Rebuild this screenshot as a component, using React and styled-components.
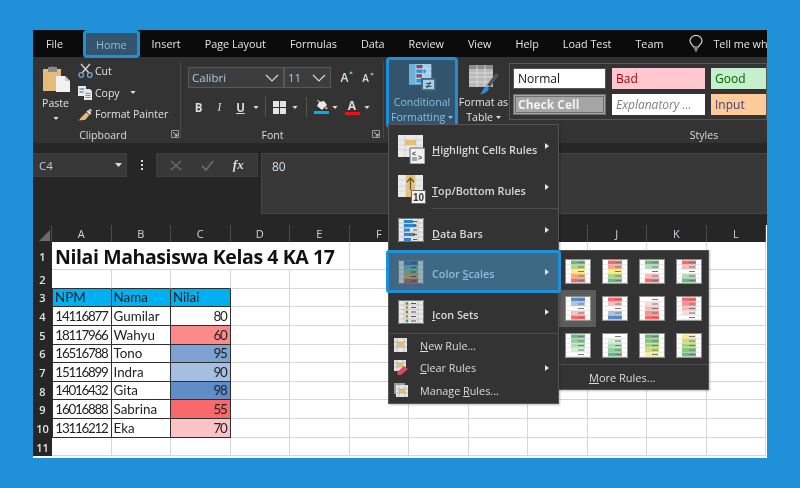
import React from "react";
import styled, { createGlobalStyle } from "styled-components";

const Global = createGlobalStyle`
  html, body { margin: 0; padding: 0; background: #1f8fd8; }
  body { width: 800px; height: 488px; overflow: hidden; font-family: "Open Sans", "Liberation Sans", sans-serif; }
`;

const Page = styled.div`
  width: 800px; height: 488px; padding: 30px 33px; box-sizing: border-box;
  background: #2090d9;
  filter: blur(0.35px);
`;
const Win = styled.div`
  position: relative; width: 734px; height: 428px; overflow: hidden;
  display: flex; flex-direction: column; background: #262626;
`;

/* Tabs */
const TabBar = styled.div`
  height: 27px; flex: none; display: flex; align-items: stretch; background: #0b0b0b; padding-left: 1px; position: relative; z-index: 2;
`;
const Tab = styled.div`
  display: flex; align-items: center; padding: 0 12px; font-size: 10.8px; color: #e4e4e4; white-space: nowrap; box-sizing: border-box;
  margin-right: ${p => p.$mr || 0}px;
  ${p => p.$active && `
    background: #32546c; color: #8fbcdc; border: 3px solid #1f8fd8; border-radius: 4px; padding: 0 10px; height: 28px;
  `}
`;
const TellMe = styled(Tab)`padding: 0;`;
const Bulb = styled.div`display: flex; align-items: center; margin: 0 10px 0 14px;`;

/* Ribbon */
const Ribbon = styled.div`
  height: 86px; flex: none; background: #333333; display: flex; color: #e2e2e2; font-size: 10.5px;
`;
const Group = styled.div`
  position: relative; width: ${p => p.$w}px; flex: none; display: flex; flex-direction: column; box-sizing: border-box;
  ${p => p.$sep && `&::after { content: ""; position: absolute; right: 0; top: 5px; bottom: 5px; width: 1px; background: #4a4a4a; }`}
`;
const GroupBody = styled.div`flex: 1; min-height: 0; display: flex;`;
const GroupLabel = styled.div`
  height: 16px; flex: none; display: flex; align-items: center; justify-content: center; font-size: 10.5px; color: #dcdcdc; position: relative;
  padding-right: ${p => p.$pr || 0}px; padding-left: ${p => p.$pl || 0}px;
`;
const Launcher = styled.svg`position: absolute; right: ${p => p.$r || 6}px; top: 3px;`;
const PasteCol = styled.div`
  width: 45px; flex: none; display: flex; flex-direction: column; align-items: center; padding: 8px 0 0 0; box-sizing: border-box;
`;
const PasteText = styled.div`margin-top: 3px; line-height: 14px;`;
const Caret = styled.svg`
  display: ${p => p.$inline ? "inline-block" : "block"}; flex: none;
  vertical-align: ${p => p.$inline ? "2px" : "baseline"};
  margin-left: ${p => p.$ml || 0}px; margin-right: ${p => p.$mr || 0}px; margin-top: ${p => p.$mt || 0}px;
`;
const ClipList = styled.div`display: flex; flex-direction: column; padding-top: 3px;`;
const ClipRow = styled.div`
  display: flex; align-items: center; height: 21.7px; gap: 2px; white-space: nowrap;
`;
const ClipText = styled.span`margin-left: ${p => p.$ml || 0}px;`;
const FontArea = styled.div`display: flex; flex-direction: column; padding: 10px 0 0 7px;`;
const ComboRow = styled.div`display: flex; align-items: center;`;
const Combo = styled.div`
  display: flex; align-items: center; justify-content: space-between; box-sizing: border-box;
  width: ${p => p.$w}px; height: 21px; border: 1px solid #585858; background: #3d3d3d; color: #a8cce8; padding: 0 4px 0 3px;
  font-size: 11.5px; margin-right: ${p => p.$mr || 0}px;
`;
const GrowA = styled.div`
  position: relative; font-size: ${p => p.$s}px; color: #ddd; width: 21px; text-align: center; font-weight: 600;
`;
const GrowMark = styled.svg`position: absolute; right: 2px; top: 2px; transform: ${p => p.$up ? "rotate(180deg)" : "none"};`;
const ToolRow = styled.div`display: flex; align-items: center; margin-top: 7px; height: 24px;`;
const FmtBtn = styled.span`
  width: 21px; text-align: center; font-size: 11.5px; color: #ddd;
  font-weight: ${p => p.$i ? 400 : 700}; font-style: ${p => p.$i ? "italic" : "normal"};
  text-decoration: ${p => p.$u ? "underline" : "none"}; font-family: ${p => p.$i ? '"Liberation Serif", serif' : '"Open Sans", sans-serif'};
`;
const Vsep = styled.span`width: 1px; height: 20px; background: #555; margin-left: ${p => p.$l}px; margin-right: ${p => p.$r}px;`;
const IconBtn = styled.div`width: ${p => p.$w}px; display: flex; flex-direction: column; align-items: center;`;
const ColorBar = styled.span`display: block; width: 15px; height: 3px; background: ${p => p.$c};`;
const AText = styled.span`font-size: 12px; line-height: 12px; font-weight: 700; color: #ddd;`;
const BigBtn = styled.div`
  box-sizing: border-box; width: ${p => p.$w}px; height: 71px; flex: none; display: flex; flex-direction: column; align-items: center;
  padding-top: ${p => p.$pt}px; line-height: 15px; font-size: 10.6px; white-space: nowrap; text-align: center;
  ${p => p.$active && `background: #32546c; color: #8fbcdc; border: 3px solid #1f8fd8; border-radius: 4px;`}
`;
const BigLabel = styled.div`margin-top: ${p => p.$mt}px;`;
const Gallery = styled.div`
  display: grid; grid-template-columns: 93px 93px 60px; grid-template-rows: 21px 21px; column-gap: 6px; row-gap: 5px;
  width: 258px; height: 57px; box-sizing: border-box; margin-top: 6px; border: 1px solid #565656; padding: 4px 0 0 3px; flex: none; overflow: hidden;
`;
const StyleCell = styled.div`
  display: flex; align-items: center; padding-left: 4px; font-size: 12px; box-sizing: border-box;
  background: ${p => p.$bg}; color: ${p => p.$fg}; white-space: nowrap;
  font-style: ${p => p.$i ? "italic" : "normal"}; font-weight: ${p => p.$b ? 700 : 400};
  ${p => p.$bd && `border: 1px solid ${p.$bd};`}
  ${p => p.$dbl && `outline: 1px solid #6e6e6e; outline-offset: -3px; border: 1px solid #6e6e6e;`}
`;

/* Formula bar */
const FormulaArea = styled.div`
  height: 82px; flex: none; background: #262626; display: flex; padding-top: 10px; box-sizing: border-box; align-items: flex-start;
`;
const NameBox = styled.div`
  width: 94px; height: 24px; box-sizing: border-box; background: #383838; border: 1px solid #3f3f3f; border-left: 0; display: flex; align-items: center; justify-content: space-between;
  padding: 0 4px 0 6px; color: #a8cce8; font-size: 11.5px; flex: none;
`;
const Dots = styled.div`width: 29px; flex: none; height: 24px; display: flex; flex-direction: column; align-items: center; justify-content: center; gap: 2px;`;
const Dot = styled.span`width: 2px; height: 2px; background: #ddd;`;
const FnBox = styled.div`
  width: 102px; height: 24px; background: #383838; border: 1px solid #3f3f3f; box-sizing: border-box; display: flex; align-items: center; justify-content: space-around; padding: 0 4px; flex: none; margin-right: 3px;
`;
const Fx = styled.span`font-family: "Liberation Serif", serif; font-style: italic; font-weight: 700; font-size: 13px; color: #ddd;`;
const FormulaInput = styled.div`
  flex: 1; height: 61px; box-sizing: border-box; background: #383838; border: 1px solid #454545; border-right: 0; color: #d4dfe8; font-size: 12px; padding: 4px 10px;
`;

/* Sheet */
const Sheet = styled.div`
  flex: 1; min-height: 0; display: grid; background: #fff;
  grid-template-columns: 19px repeat(12, 59.5px);
  grid-template-rows: 17px 28px repeat(10, 18.65px);
  font-family: Lato, "Open Sans", sans-serif; font-size: 13.4px; color: #222;
`;
const Corner = styled.div`background: #262626; display: flex; align-items: flex-end; justify-content: flex-end; border-right: 1px solid #4b4b4b; box-sizing: border-box; padding: 0 1px 1px 0;`;
const ColHead = styled.div`
  background: #262626; color: #cfd6dc; display: flex; align-items: center; justify-content: center; font-family: "Open Sans", sans-serif; font-size: 11px;
  border-right: 1px solid #4b4b4b; box-sizing: border-box;
`;
const RowHead = styled.div`
  background: #262626; color: #e4e4e4; display: flex; align-items: center; justify-content: center; font-family: "Open Sans", sans-serif; font-size: 11px; font-weight: 600; box-sizing: border-box;
`;
const Cell = styled.div`
  box-sizing: border-box; display: flex; align-items: center; overflow: visible; white-space: nowrap;
  padding: 1px ${p => p.$right ? 3 : 2}px 0 2px; line-height: 1;
  letter-spacing: ${p => p.$right ? "-1.25px" : "0"};
  justify-content: ${p => p.$right ? "flex-end" : "flex-start"};
  background: ${p => p.$bg || "#fff"};
  border-right: 1px solid ${p => p.$tbl ? "#2f2f2f" : "#d6d6d6"};
  border-bottom: 1px solid ${p => p.$tbl || p.$above ? "#2f2f2f" : "#d6d6d6"};
  ${p => p.$tbl && p.$first && `border-left: 1px solid #2f2f2f;`}
`;
const Title = styled(Cell)`
  grid-column: span 5; font-size: 19.5px; font-weight: 700; color: #111; font-family: "Open Sans", sans-serif; padding: 3px 0 0 3px; letter-spacing: -0.4px;
`;

/* Menus */
const Menu = styled.div`
  position: absolute; left: ${p => p.$l}px; top: ${p => p.$t}px; width: ${p => p.$w}px; height: ${p => p.$hh}px; z-index: 3;
  background: #333333; border: 1px solid #555; box-sizing: border-box; color: #dcdcdc; font-size: 11px;
  padding-top: ${p => p.$pt || 0}px; box-shadow: 1px 1px 2px rgba(0,0,0,.25);
`;
const BigRow = styled.div`
  position: relative; box-sizing: border-box; height: ${p => p.$h}px; padding-left: 9px; display: flex; align-items: center; font-weight: 600; color: #d8d8d8; font-size: 10.8px;
  ${p => p.$active && `
    margin: 0 -3px; background: #3d6985; border: 3px solid #1f8fd8; border-radius: 3px; color: #8fbcdc;
  `}
`;
const BigIcon = styled.div`width: 34px; flex: none; display: flex; margin-top: ${p => p.$mt || 0}px; margin-bottom: ${p => p.$mb || 0}px;`;
const RowLabel = styled.span`margin-top: ${p => p.$mt || 0}px;`;
const ArrowRight = styled.span`
  position: absolute; right: 9px; top: 50%; margin-top: ${p => p.$mt || 0}px; transform: translateY(-50%);
  width: 0; height: 0; border-left: 4px solid #e4e4e4; border-top: 3.5px solid transparent; border-bottom: 3.5px solid transparent;
`;
const Rule = styled.div`height: 1px; background: #4d4d4d; margin-left: ${p => p.$ml || 0}px;`;
const SmallRow = styled.div`
  position: relative; height: 22.5px; display: flex; align-items: center; padding-left: 5px; font-size: 10.8px;
`;
const SmallIcon = styled.div`width: 26px; flex: none; display: flex;`;
const SwatchGrid = styled.div`
  display: grid; grid-template-columns: repeat(4, 37px); grid-template-rows: repeat(3, 37px); padding: 2px 0 0 1px; height: 113px; box-sizing: border-box;
`;
const SwatchCell = styled.div`
  display: flex; align-items: center; justify-content: center; ${p => p.$hot && `background: #5c5c5c;`}
`;
const MoreRow = styled.div`
  border-top: 1px solid #4d4d4d; padding-left: 31px; height: 25px; display: flex; align-items: center;
`;

const CaretDown = ({ c = "#ddd", w = 7, h = 4, inline, ml, mr, mt }) => (
  <Caret width={w} height={h} viewBox="0 0 7 4" $inline={inline} $ml={ml} $mr={mr} $mt={mt}><path d="M0 0h7L3.5 4z" fill={c} /></Caret>
);
const Chevron = () => (
  <svg width="14" height="8" viewBox="0 0 14 8"><path d="M1 1l6 6 6-6" fill="none" stroke="#d8d8d8" strokeWidth="1.2" /></svg>
);
const Launch = ({ r }) => (
  <Launcher $r={r} width="8" height="8" viewBox="0 0 8 8"><path d="M.5 7.5v-7h7v7z" fill="none" stroke="#999" /><path d="M2 2l4 4M6 3.5V6H3.5" fill="none" stroke="#ccc" /></Launcher>
);

const PasteIcon = () => (
  <svg width="28" height="28" viewBox="0 0 28 28">
    <path d="M1 4h18v22H1z" fill="#e3bb7a" />
    <path d="M6 2h3a2 2 0 0 1 3 0h3v5H6z" fill="#8a8a8a" />
    <path d="M14 11h9l5 5v11H14z" fill="#f2f2f2" />
    <path d="M23 11v5h5" fill="#c8c8c8" />
  </svg>
);
const Scissors = () => (
  <svg width="15" height="15" viewBox="0 0 15 15" fill="none">
    <path d="M3 1l8 9M12 1l-8 9" stroke="#d8d8d8" strokeWidth="1.3" />
    <circle cx="3.2" cy="12" r="2.3" stroke="#6fa8d8" strokeWidth="1.3" />
    <circle cx="11.8" cy="12" r="2.3" stroke="#6fa8d8" strokeWidth="1.3" />
  </svg>
);
const CopyIcon = () => (
  <svg width="15" height="15" viewBox="0 0 15 15">
    <path d="M0 1h8v10H0z" fill="#eee" /><path d="M1.5 3h5v2h-5zM1.5 6h4v2h-4z" fill="#7aa7cf" />
    <path d="M6 4h6l2 2v9H6z" fill="#e8e8e8" /><path d="M7.5 8h5v1h-5zM7.5 10h5v1h-5zM7.5 12h5v1h-5z" fill="#5b95c9" />
  </svg>
);
const Painter = () => (
  <svg width="15" height="15" viewBox="0 0 16 15">
    <path d="M9 5l3 3-4 5-7 1 2-3z" fill="#e3bb7a" />
    <path d="M9 4l2-1 3 3-1 2z" fill="#eee" />
    <path d="M11 3l2-2 2 2-2 2z" fill="#bbb" />
  </svg>
);
const BordersIcon = () => (
  <svg width="13" height="13" viewBox="0 0 13 13"><path d="M0 0h6v6H0zM7 0h6v6H7zM0 7h6v6H0zM7 7h6v6H7z" fill="#e4e4e4" /></svg>
);
const FillIcon = () => (
  <svg width="15" height="11" viewBox="0 0 15 11"><path d="M5 2l5-1 3 4-5 5-5-4z" fill="#e8e8e8" /><path d="M3 1c2-1 3 0 3 3" fill="none" stroke="#e8e8e8" /><path d="M12 6l2 3h-3z" fill="#e3bb7a" /></svg>
);
const CFIcon = () => (
  <svg width="29" height="29" viewBox="0 0 29 29">
    <path d="M0 0h24v22H0z" fill="#a5cfe8" />
    <path d="M0 0h7v22H0z" fill="#6eb0dc" />
    <path d="M8 1h7v4H8z" fill="#8a4a55" /><path d="M8 6h10v4H8z" fill="#2f8fdc" /><path d="M8 11h6v4H8z" fill="#8a4a55" /><path d="M8 16h9v4H8z" fill="#2f8fdc" />
    <path d="M7 5h17M7 10h17M7 15h17M15 0v22" stroke="#c9e2f2" strokeWidth=".7" />
    <path d="M13 15h16v14H13z" fill="#43657c" /><path d="M15 17h12v10H15z" fill="#a8cfe6" />
    <path d="M18 21h6M18 24h6M23 19l-4 7" stroke="#32546c" strokeWidth="1.2" />
  </svg>
);
const TableIcon = () => (
  <svg width="31" height="31" viewBox="0 0 31 31">
    <path d="M1 1h24v22H1z" fill="#b9b9b9" />
    <path d="M1 1h24v4H1z" fill="#8e8e8e" />
    <path d="M1 9h24M1 13h24M1 18h24M9 1v22M17 1v22" stroke="#e2e2e2" strokeWidth=".8" />
    <path d="M28 9l3 2-9 12-3-2z" fill="#555" />
    <path d="M18 22l3 2c-1 4-5 6-9 6 3-2 3-6 6-8z" fill="#2f8fdc" />
  </svg>
);

const MiniSvg = styled.svg`opacity: ${p => p.$dim ? 0.55 : 1};`;
const MiniGrid = ({ children, dim }) => (
  <MiniSvg width="26" height="24" viewBox="0 0 26 24" $dim={dim}>
    <path d="M0 0h26v24H0z" fill="#e9e9e9" />
    <path d="M.5.5h25v23H.5z" fill="none" stroke="#777" />
    <path d="M1 5h24M1 9.5h24M1 14h24M1 19h24M6 1v22M20 1v22" stroke="#bdbdbd" strokeWidth=".7" />
    {children}
  </MiniSvg>
);
const HighlightIcon = () => (
  <svg width="27" height="30" viewBox="0 0 27 30">
    <path d="M0 1h25v22H0z" fill="#eaeaea" />
    <path d="M1 6h23M1 11h23M1 16h23M7 1v22M18 1v22" stroke="#c8c8c8" strokeWidth=".7" />
    <path d="M7 6h11v5H7z" fill="#e8bf6f" />
    <path d="M12 14h15v16H12z" fill="#f0f0f0" stroke="#666" />
    <text x="14" y="22" fontSize="7" fontFamily="Liberation Sans" fill="#333">&lt;</text>
    <text x="20" y="26" fontSize="7" fontFamily="Liberation Sans" fill="#333">&gt;</text>
    <path d="M14 24h5M14 26h5" stroke="#333" strokeWidth=".8" />
  </svg>
);
const TopIcon = () => (
  <svg width="28" height="29" viewBox="0 0 28 29">
    <path d="M0 0h25v22H0z" fill="#eaeaea" />
    <path d="M8 0h9v22H8z" fill="#e8bf6f" />
    <path d="M1 5h23M1 11h23M1 16h23M8 1v21M17 1v21" stroke="#c8c8c8" strokeWidth=".7" />
    <path d="M12.5 15V3M9 7l3.5-4L16 7" fill="none" stroke="#6a4f25" strokeWidth="1.2" />
    <path d="M13.5 15.5h14v13h-14z" fill="#f2f2f2" stroke="#666" />
    <text x="15" y="26" fontSize="10" fontWeight="700" fontFamily="Liberation Sans" fill="#333">10</text>
  </svg>
);
const DataBarsIcon = () => (
  <MiniGrid>
    <path d="M6 2h9v3H6zM6 10.5h6v3H6zM6 6h12v3H6zM6 15h11v3H6zM6 20h7v3H6z" fill="#2f83d0" />
    <path d="M15 3.5h4M15 7.5h4M15 12h4M15 16.5h4M15 21.5h4" stroke="#555" />
  </MiniGrid>
);
const ScaleIcon = () => (
  <MiniGrid dim>
    <path d="M6 1h14v4H6z" fill="#2f6fb5" /><path d="M6 5h14v4.5H6z" fill="#5cb0a8" /><path d="M6 9.5h14V14H6z" fill="#74c08a" /><path d="M6 14h14v5H6z" fill="#d4a14f" /><path d="M6 19h14v4H6z" fill="#c24a4a" />
    <path d="M13 3h5M13 7.5h5M13 12h5M13 16.5h5M13 21h5" stroke="#333" />
  </MiniGrid>
);
const IconSetsIcon = () => (
  <MiniGrid>
    <circle cx="9" cy="3.5" r="1.4" fill="#2ea36b" /><circle cx="9" cy="7.5" r="1.4" fill="#e07b2e" /><circle cx="9" cy="12" r="1.4" fill="#2ea36b" /><circle cx="9" cy="16.5" r="1.4" fill="#e07b2e" /><circle cx="9" cy="21" r="1.4" fill="#2ea36b" />
    <path d="M13 3.5h5M13 7.5h5M13 12h5M13 16.5h5M13 21h5" stroke="#555" />
  </MiniGrid>
);
const NewIcon = () => (
  <svg width="13" height="14" viewBox="0 0 13 14"><path d="M0 0h13v14H0z" fill="#e6e6e6" /><path d="M3 4h7v5H3z" fill="#e8bf6f" /><path d="M0 4h13M0 9h13M3 0v14M10 0v14" stroke="#aaa" strokeWidth=".6" /></svg>
);
const ClearIcon = () => (
  <svg width="15" height="15" viewBox="0 0 15 15"><path d="M0 0h12v11H0z" fill="#e6e6e6" /><path d="M3 3h6v4H3z" fill="#e8bf6f" /><path d="M0 3h12M0 7h12M3 0v11M9 0v11" stroke="#aaa" strokeWidth=".6" /><path d="M3 12l7-6 4 3-7 6H4z" fill="#d84a5c" /></svg>
);
const ManageIcon = () => (
  <svg width="14" height="14" viewBox="0 0 14 14"><path d="M0 0h11v2H2v9H0z" fill="#999" /><path d="M2 2h12v12H2z" fill="#e6e6e6" /><path d="M5 6h6v4H5z" fill="#e8bf6f" /><path d="M2 6h12M2 10h12M5 2v12M11 2v12" stroke="#aaa" strokeWidth=".6" /></svg>
);

const Swatch = ({ colors }) => (
  <svg width="26" height="25" viewBox="0 0 26 25">
    <path d="M0 0h26v25H0z" fill="#8f8f8f" />
    <path d="M1 1h24v23H1z" fill="#fff" />
    {colors.map((c, i) => (
      <g key={i}>
        <path d={`M6 ${1.5 + i * 4.5}h14v4H6z`} fill={c} />
        <path d={`M13 ${3.5 + i * 4.5}h6`} stroke="#777" strokeWidth="1" />
        <path d={`M1 ${5.7 + i * 4.5}h24`} stroke="#c9c9c9" strokeWidth=".5" />
      </g>
    ))}
  </svg>
);

const G = "#63be7b", Y = "#ffeb84", R = "#f8696b", W = "#ffffff", B = "#5a8ac6";
const scales = [
  [G, "#b1d580", Y, "#fbaa77", R], [R, "#fbaa77", Y, "#b1d580", G], [G, "#b1ddb1", W, "#fcb9ba", R], [R, "#fcb9ba", W, "#b1ddb1", G],
  [B, "#acc4e2", W, "#fcbfc0", R], [R, "#fcbfc0", W, "#acc4e2", B], [W, "#fddada", "#fcb4b5", "#fa8f90", R], [R, "#fa8f90", "#fcb4b5", "#fddada", W],
  [G, "#8fd0a0", "#b1ddb1", "#d8eedd", W], [W, "#d8eedd", "#b1ddb1", "#8fd0a0", G], [G, "#85c77c", "#a9d27f", "#cfdd82", Y], [Y, "#cfdd82", "#a9d27f", "#85c77c", G],
];

const cols = ["A", "B", "C", "D", "E", "F", "G", "H", "I", "J", "K", "L"];
const data = [
  ["14116877", "Gumilar", "80", "#ffffff"],
  ["18117966", "Wahyu", "60", "#fb8a8b"],
  ["16516788", "Tono", "95", "#7ea3d3"],
  ["15116899", "Indra", "90", "#a6bfe1"],
  ["14016432", "Gita", "98", "#5f8dc8"],
  ["16016888", "Sabrina", "55", "#f8696b"],
  ["13116212", "Eka", "70", "#fbc3c5"],
];

const renderRow = (r) => {
  const out = [<RowHead key={`h${r}`}>{r}</RowHead>];
  if (r === 1) {
    out.push(<Title key="t">Nilai Mahasiswa Kelas 4 KA 17</Title>);
    cols.slice(5).forEach(c => out.push(<Cell key={c + r} />));
    return out;
  }
  cols.forEach((c, i) => {
    const key = c + r;
    if (r === 3 && i < 3) {
      out.push(<Cell key={key} $tbl $first={i === 0} $bg="#00b0f0">{["NPM", "Nama", "Nilai"][i]}</Cell>);
    } else if (r >= 4 && r <= 10 && i < 3) {
      const d = data[r - 4];
      out.push(
        <Cell key={key} $tbl $first={i === 0} $right={i !== 1} $bg={i === 2 ? d[3] : "#fff"}>{d[i]}</Cell>
      );
    } else {
      out.push(<Cell key={key} $above={r === 2 && i < 3} />);
    }
  });
  return out;
};

export default function App() {
  return (
    <>
      <Global />
      <Page>
        <Win>
          <TabBar>
            <Tab $mr={8}>File</Tab>
            <Tab $active>Home</Tab>
            <Tab>Insert</Tab>
            <Tab>Page Layout</Tab>
            <Tab>Formulas</Tab>
            <Tab>Data</Tab>
            <Tab>Review</Tab>
            <Tab>View</Tab>
            <Tab>Help</Tab>
            <Tab>Load Test</Tab>
            <Tab>Team</Tab>
            <Bulb>
              <svg width="14" height="17" viewBox="0 0 14 17" fill="none" stroke="#e4e4e4" strokeWidth="1.1">
                <path d="M4.5 12C3.5 9.5 1 8.5 1 5.8a6 5.3 0 0 1 12 0c0 2.7-2.5 3.7-3.5 6.2z" /><path d="M5 14h4M6 16h2" />
              </svg>
            </Bulb>
            <TellMe>Tell me what</TellMe>
          </TabBar>
          <Ribbon>
            <Group $w={148} $sep>
              <GroupBody>
                <PasteCol>
                  <PasteIcon />
                  <PasteText>Paste</PasteText>
                  <CaretDown mt={7} w={6} h={3} />
                </PasteCol>
                <ClipList>
                  <ClipRow><Scissors /><ClipText>Cut</ClipText></ClipRow>
                  <ClipRow><CopyIcon /><ClipText>Copy</ClipText><CaretDown w={6} h={3} ml={8} /></ClipRow>
                  <ClipRow><Painter /><ClipText>Format Painter</ClipText></ClipRow>
                </ClipList>
              </GroupBody>
              <GroupLabel $pr={8}>Clipboard<Launch r={2} /></GroupLabel>
            </Group>
            <Group $w={203} $sep>
              <GroupBody>
                <FontArea>
                  <ComboRow>
                    <Combo $w={96}>Calibri<Chevron /></Combo>
                    <Combo $w={47} $mr={3}>11<Chevron /></Combo>
                    <GrowA $s={12}>A<GrowMark $up width="4" height="3" viewBox="0 0 7 4"><path d="M0 0h7L3.5 4z" fill="#8fbcdc" /></GrowMark></GrowA>
                    <GrowA $s={10}>A<GrowMark width="4" height="3" viewBox="0 0 7 4"><path d="M0 0h7L3.5 4z" fill="#8fbcdc" /></GrowMark></GrowA>
                  </ComboRow>
                  <ToolRow>
                    <FmtBtn>B</FmtBtn>
                    <FmtBtn $i>I</FmtBtn>
                    <FmtBtn $u>U</FmtBtn>
                    <CaretDown w={6} h={3} ml={2} />
                    <Vsep $l={6} $r={7} />
                    <BordersIcon />
                    <CaretDown w={6} h={3} ml={6} />
                    <Vsep $l={8} $r={6} />
                    <IconBtn $w={16}><FillIcon /><ColorBar $c="#00aeef" /></IconBtn>
                    <CaretDown w={6} h={3} ml={3} mr={6} />
                    <IconBtn $w={16}><AText>A</AText><ColorBar $c="#ee1111" /></IconBtn>
                    <CaretDown w={6} h={3} ml={4} />
                  </ToolRow>
                </FontArea>
              </GroupBody>
              <GroupLabel $pr={20}>Font<Launch r={4} /></GroupLabel>
            </Group>
            <Group $w={2} />
            <BigBtn $w={72} $active $pt={4}>
              <CFIcon />
              <BigLabel $mt={4}>Conditional<br />Formatting <CaretDown c="#8fbcdc" w={5} h={3} inline /></BigLabel>
            </BigBtn>
            <BigBtn $w={51} $pt={7}>
              <TableIcon />
              <BigLabel $mt={0}>Format as<br />Table <CaretDown w={5} h={3} inline /></BigLabel>
            </BigBtn>
            <Group $w={258}>
              <GroupBody>
                <Gallery>
                  <StyleCell $bg="#fff" $fg="#111" $bd="#555">Normal</StyleCell>
                  <StyleCell $bg="#ffc7ce" $fg="#9c0006">Bad</StyleCell>
                  <StyleCell $bg="#c6efce" $fg="#006100">Good</StyleCell>
                  <StyleCell $bg="#a5a5a5" $fg="#f2f2f2" $b $dbl>Check Cell</StyleCell>
                  <StyleCell $bg="#fff" $fg="#7f7f7f" $i>Explanatory ...</StyleCell>
                  <StyleCell $bg="#ffcc99" $fg="#3f3f76">Input</StyleCell>
                </Gallery>
              </GroupBody>
              <GroupLabel $pl={132}>Styles</GroupLabel>
            </Group>
          </Ribbon>
          <FormulaArea>
            <NameBox>C4<CaretDown w={7} h={4} /></NameBox>
            <Dots><Dot /><Dot /><Dot /></Dots>
            <FnBox>
              <svg width="12" height="11" viewBox="0 0 12 11" fill="none" stroke="#6a6a6a" strokeWidth="1.6"><path d="M1 1l10 9M11 1L1 10" /></svg>
              <svg width="13" height="11" viewBox="0 0 13 11" fill="none" stroke="#6a6a6a" strokeWidth="1.8"><path d="M1 6l4 4 7-9" /></svg>
              <Fx>fx</Fx>
            </FnBox>
            <FormulaInput>80</FormulaInput>
          </FormulaArea>
          <Sheet>
            <Corner>
              <svg width="11" height="11" viewBox="0 0 11 11"><path d="M11 0v11H0z" fill="#6a6a6a" /></svg>
            </Corner>
            {cols.map(c => <ColHead key={c}>{c}</ColHead>)}
            {Array.from({ length: 11 }, (_, i) => renderRow(i + 1))}
          </Sheet>

          <Menu $l={524} $t={220} $w={152} $hh={140}>
            <SwatchGrid>
              {scales.map((c, i) => (
                <SwatchCell key={i} $hot={i === 4}><Swatch colors={c} /></SwatchCell>
              ))}
            </SwatchGrid>
            <MoreRow><span><u>M</u>ore Rules...</span></MoreRow>
          </Menu>

          <Menu $l={355} $t={94} $w={171} $hh={280} $pt={4}>
            <BigRow $h={41}><BigIcon $mb={2}><HighlightIcon /></BigIcon><RowLabel $mt={-1}><u>H</u>ighlight Cells Rules</RowLabel><ArrowRight $mt={-3.5} /></BigRow>
            <BigRow $h={38}><BigIcon><TopIcon /></BigIcon><RowLabel $mt={2}><u>T</u>op/Bottom Rules</RowLabel><ArrowRight $mt={-2} /></BigRow>
            <Rule $ml={42} />
            <BigRow $h={41}><BigIcon><DataBarsIcon /></BigIcon><RowLabel $mt={7}><u>D</u>ata Bars</RowLabel><ArrowRight $mt={0.5} /></BigRow>
            <BigRow $h={43} $active><BigIcon><ScaleIcon /></BigIcon><RowLabel $mt={4}>Color <u>S</u>cales</RowLabel><ArrowRight /></BigRow>
            <BigRow $h={40}><BigIcon $mb={2}><IconSetsIcon /></BigIcon><RowLabel $mt={3}><u>I</u>con Sets</RowLabel><ArrowRight $mt={-1} /></BigRow>
            <Rule />
            <SmallRow><SmallIcon><NewIcon /></SmallIcon><span><u>N</u>ew Rule...</span></SmallRow>
            <SmallRow><SmallIcon><ClearIcon /></SmallIcon><span><u>C</u>lear Rules</span><ArrowRight /></SmallRow>
            <SmallRow><SmallIcon><ManageIcon /></SmallIcon><span>Manage <u>R</u>ules...</span></SmallRow>
          </Menu>
        </Win>
      </Page>
    </>
  );
}
